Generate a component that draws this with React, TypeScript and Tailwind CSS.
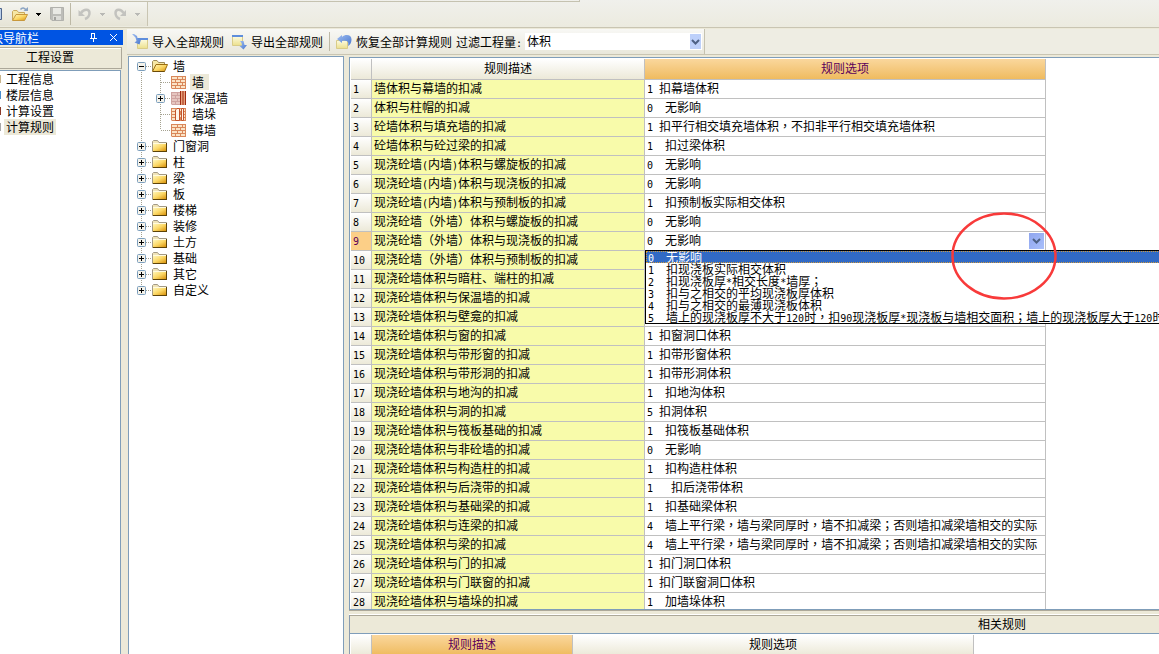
import React from "react";
import clsx from "clsx";

type Rule = [description: string, option: string];

const rules: Rule[] = [
  ["墙体积与幕墙的扣减", "1 扣幕墙体积"],
  ["体积与柱帽的扣减", "0  无影响"],
  ["砼墙体积与填充墙的扣减", "1 扣平行相交填充墙体积，不扣非平行相交填充墙体积"],
  ["砼墙体积与砼过梁的扣减", "1  扣过梁体积"],
  ["现浇砼墙(内墙)体积与螺旋板的扣减", "0  无影响"],
  ["现浇砼墙(内墙)体积与现浇板的扣减", "0  无影响"],
  ["现浇砼墙(内墙)体积与预制板的扣减", "1  扣预制板实际相交体积"],
  ["现浇砼墙（外墙）体积与螺旋板的扣减", "0  无影响"],
  ["现浇砼墙（外墙）体积与现浇板的扣减", "0  无影响"],
  ["现浇砼墙（外墙）体积与预制板的扣减", ""],
  ["现浇砼墙体积与暗柱、端柱的扣减", ""],
  ["现浇砼墙体积与保温墙的扣减", ""],
  ["现浇砼墙体积与壁龛的扣减", ""],
  ["现浇砼墙体积与窗的扣减", "1 扣窗洞口体积"],
  ["现浇砼墙体积与带形窗的扣减", "1 扣带形窗体积"],
  ["现浇砼墙体积与带形洞的扣减", "1 扣带形洞体积"],
  ["现浇砼墙体积与地沟的扣减", "1  扣地沟体积"],
  ["现浇砼墙体积与洞的扣减", "5 扣洞体积"],
  ["现浇砼墙体积与筏板基础的扣减", "1  扣筏板基础体积"],
  ["现浇砼墙体积与非砼墙的扣减", "0  无影响"],
  ["现浇砼墙体积与构造柱的扣减", "1  扣构造柱体积"],
  ["现浇砼墙体积与后浇带的扣减", "1   扣后浇带体积"],
  ["现浇砼墙体积与基础梁的扣减", "1  扣基础梁体积"],
  ["现浇砼墙体积与连梁的扣减", "4  墙上平行梁，墙与梁同厚时，墙不扣减梁；否则墙扣减梁墙相交的实际"],
  ["现浇砼墙体积与梁的扣减", "4  墙上平行梁，墙与梁同厚时，墙不扣减梁；否则墙扣减梁墙相交的实际"],
  ["现浇砼墙体积与门的扣减", "1 扣门洞口体积"],
  ["现浇砼墙体积与门联窗的扣减", "1 扣门联窗洞口体积"],
  ["现浇砼墙体积与墙垛的扣减", "1  加墙垛体积"],
];

const ACTIVE_ROW = 8;

const choices = [
  "0  无影响",
  "1  扣现浇板实际相交体积",
  "2  扣现浇板厚*相交长度*墙厚；",
  "3  扣与之相交的平均现浇板厚体积",
  "4  扣与之相交的最薄现浇板体积",
  "5  墙上的现浇板厚不大于120时，扣90现浇板厚*现浇板与墙相交面积；墙上的现浇板厚大于120时",
];

const categories = ["门窗洞", "柱", "梁", "板", "楼梯", "装修", "土方", "基础", "其它", "自定义"];

// Half-width characters take exactly half of a 12px ideograph
const Txt: React.FC<{ children: string }> = ({ children }) => (
  <span className="whitespace-pre">
    {children.split(/([\x20-\x7e]+|[，；]+)/).map((part, i) => {
      if (/^[\x20-\x7e]/.test(part)) {
        return (
          <span key={i} className="font-['DejaVu_Sans_Mono',monospace] text-[10px] leading-none">
            {part}
          </span>
        );
      }
      if (/^[，；]/.test(part)) {
        return (
          <span key={i} lang="zh-TW" className="font-['Noto_Sans_CJK_TC',sans-serif] leading-none">
            {part}
          </span>
        );
      }
      return part;
    })}
  </span>
);

const Gradients = () => (
  <svg width="0" height="0" className="absolute" aria-hidden="true">
    <defs>
      <linearGradient id="folder" x1="0" y1="0" x2="1" y2="1">
        <stop offset="0" stopColor="#fff6b8" />
        <stop offset="0.5" stopColor="#fbd765" />
        <stop offset="1" stopColor="#d8920c" />
      </linearGradient>
      <linearGradient id="note" x1="0" y1="0" x2="0" y2="1">
        <stop offset="0" stopColor="#fdfbe0" />
        <stop offset="1" stopColor="#ece08c" />
      </linearGradient>
      <linearGradient id="arrow" x1="0" y1="0" x2="1" y2="1">
        <stop offset="0" stopColor="#9dbcf0" />
        <stop offset="1" stopColor="#4a78cf" />
      </linearGradient>
    </defs>
  </svg>
);

const Folder = () => (
  <svg width="16" height="16" viewBox="0 0 16 16" className="shrink-0">
    <path d="M0.5 13.5V3.5L1.5 2.5H5.5L7 4.5H14.5V13.5Z" fill="#efe3b8" stroke="#a39a86" />
    <path d="M1 6H14V13H1Z" fill="url(#folder)" />
    <path d="M1 5.5H14" stroke="#fffbe0" />
    <path d="M1 13.5H15M14.5 5V14" stroke="#5d4308" />
  </svg>
);

const FolderOpen = () => (
  <svg width="16" height="16" viewBox="0 0 16 16" className="shrink-0">
    <path d="M0.5 13V3.5L1.5 2.5H5L6.5 4.5H12.5V7" fill="#f6e7a4" stroke="#9d8a58" />
    <path d="M0.5 13.5L4 6.5H15.5L12.5 13.5Z" fill="url(#folder)" stroke="#9b6d10" />
    <path d="M1 13.5H12.5" stroke="#6b4a08" />
  </svg>
);

const Bricks: React.FC<{ variant?: "plain" | "insulated" | "pier" }> = ({ variant = "plain" }) => (
  <svg width="16" height="16" viewBox="0 0 16 16" className="shrink-0">
    <path d="M1 2H15V14H1Z" fill={variant === "insulated" ? "#e6c6c0" : "#fbe3c6"} />
    <path
      d="M0.5 2V14.5M15 2.5H1M1 5.5H15M1 8.5H15M1 11.5H15M1 14.5H15M6.5 3V5M11.5 3V5M4.5 6V8M9.5 6V8M6.5 9V11M11.5 9V11M4.5 12V14M9.5 12V14M14.5 3V14"
      fill="none"
      stroke={variant === "insulated" ? "#cfa3a0" : "#d9875a"}
    />
    {variant === "insulated" && (
      <>
        <path d="M9 1H15V15H9Z" fill="#e8a27c" />
        <path d="M9.5 1V15M12 1V15M14.5 1V15" stroke="#a02a10" />
      </>
    )}
    {variant === "pier" && (
      <path d="M4.5 14.5V4L6 2.5H8.5V14.5ZM10.5 2.5H12.5V14.5H10.5Z" fill="#fff6ea" stroke="#c4552c" />
    )}
  </svg>
);

interface BranchProps {
  sign?: "+" | "-";
  up?: boolean;
  down?: boolean;
  across?: boolean;
}

const Branch: React.FC<BranchProps> = ({ sign, up, down, across = true }) => (
  <svg width="19" height="16" viewBox="0 0 19 16" className="shrink-0">
    <g stroke="#a5a290" strokeDasharray="1 1">
      {up && <path d="M8.5 0V8" />}
      {down && <path d="M8.5 8V16" />}
      {across && <path d="M9 8.5H18" />}
    </g>
    {sign && (
      <>
        <rect x="4.5" y="4.5" width="8" height="8" rx="1" fill="#f4f2ea" stroke="#7b9ebd" />
        <path d={sign === "+" ? "M6 8.5H11M8.5 6V11" : "M6 8.5H11"} stroke="#000" />
      </>
    )}
  </svg>
);

const TreeLabel: React.FC<{ text: string; selected?: boolean }> = ({ text, selected }) => (
  <span className={clsx("ml-[3px] h-4 px-[2px] leading-4", selected && "bg-[#ece9d8] pr-[5px]")}>{text}</span>
);

const Tree = () => (
  <ul role="tree" className="pl-1 pt-px">
    <li role="treeitem" aria-expanded="true">
      <div className="flex h-4 items-center">
        <Branch sign="-" down />
        <FolderOpen />
        <TreeLabel text="墙" />
      </div>
      <ul role="group">
        <li role="treeitem" aria-selected="true" className="flex h-4 items-center">
          <Branch up down across={false} />
          <Branch up down />
          <Bricks />
          <TreeLabel text="墙" selected />
        </li>
        <li role="treeitem" className="flex h-4 items-center">
          <Branch up down across={false} />
          <Branch up down sign="+" />
          <Bricks variant="insulated" />
          <TreeLabel text="保温墙" />
        </li>
        <li role="treeitem" className="flex h-4 items-center">
          <Branch up down across={false} />
          <Branch up down />
          <Bricks variant="pier" />
          <TreeLabel text="墙垛" />
        </li>
        <li role="treeitem" className="flex h-4 items-center">
          <Branch up down across={false} />
          <Branch up />
          <Bricks />
          <TreeLabel text="幕墙" />
        </li>
      </ul>
    </li>
    {categories.map((name, i) => (
      <li key={name} role="treeitem" className="flex h-4 items-center">
        <Branch sign="+" up down={i < categories.length - 1} />
        <Folder />
        <TreeLabel text={name} />
      </li>
    ))}
  </ul>
);

const Caret: React.FC<{ color: string }> = ({ color }) => (
  <svg width="5" height="3" viewBox="0 0 5 3" className="shrink-0" shapeRendering="crispEdges">
    <path d="M0 0H5V1H4V2H3V3H2V2H1V1H0Z" fill={color} />
  </svg>
);

const Chevron = () => (
  <svg width="9" height="6" viewBox="0 0 9 6">
    <path d="M1 1L4.5 4.5L8 1" fill="none" stroke="#4d6185" strokeWidth="2" />
  </svg>
);

const MainToolbar = () => (
  <header className="shrink-0 border-b border-[#c9c5b2] bg-gradient-to-b from-[#f0f0ec] to-[#ecebdf] pb-px">
    <div className="h-[2px] w-1/2 border-b border-r border-[#c5c2b0]" />
    <div className="flex h-6 w-[148px] items-center overflow-hidden border-r border-[#c9c5b2] bg-gradient-to-b from-[#f4f4f0] to-[#e6e4d6]">
      <button aria-label="新建" className="-ml-[13px] shrink-0">
        <svg width="16" height="16" viewBox="0 0 16 16">
          <path d="M3 2.5H14.5V13.5H3Z" fill="#bcd0ea" stroke="#4d648c" />
        </svg>
      </button>
      <button aria-label="打开" className="ml-[9px] flex shrink-0 items-center gap-[7px]">
        <svg width="17" height="16" viewBox="0 0 17 16">
          <path d="M0.5 14V5.5L1.5 4.5H5L6.5 6.5H12.5V8" fill="#f6e7a4" stroke="#c9a85c" />
          <path d="M0.5 14.5L4 8.5H15.5L12.5 14.5Z" fill="url(#folder)" stroke="#c8983c" />
          <path d="M8.5 3.5C10 1.5 12.5 1.5 14 4" fill="none" stroke="#8aa3c2" strokeWidth="1.5" />
          <path d="M11.5 5H16V1Z" fill="#8aa3c2" />
        </svg>
        <Caret color="#000" />
      </button>
      <button aria-label="保存" disabled className="ml-2 shrink-0">
        <svg width="16" height="16" viewBox="0 0 16 16">
          <path d="M1.5 1.5H14.5V14.5H3L1.5 13Z" fill="#bdbdb9" stroke="#b1b1ad" />
          <path d="M4 2H12V8H4Z" fill="#e9e9e5" />
          <path d="M4 10H12V14H4Z" fill="#dcdcd8" />
          <path d="M5 11H7V14H5Z" fill="#a3a39f" />
        </svg>
      </button>
      <span className="ml-[5px] h-[22px] w-px shrink-0 bg-[#bdb9a6]" />
      <button aria-label="撤销" disabled className="ml-[7px] flex shrink-0 items-center gap-2">
        <svg width="14" height="14" viewBox="0 0 14 14">
          <path d="M3 6C6 1.5 11.5 2 11.5 6C11.5 9 9.5 11 7 12" fill="none" stroke="#c3c3bf" strokeWidth="2.5" />
          <path d="M0.5 3V9H7Z" fill="#c3c3bf" />
        </svg>
        <Caret color="#b9b9b5" />
      </button>
      <button aria-label="重做" disabled className="ml-2 flex shrink-0 items-center gap-2">
        <svg width="14" height="14" viewBox="0 0 14 14">
          <path d="M10.5 6C8 1.5 2.5 2 2.5 6C2.5 9 4.5 11 7 12" fill="none" stroke="#c3c3bf" strokeWidth="2.5" />
          <path d="M13 3V9H7Z" fill="#c3c3bf" />
        </svg>
        <Caret color="#b9b9b5" />
      </button>
    </div>
  </header>
);

const navItems = [
  { name: "工程信息", tint: "bg-[#c8b48c]" },
  { name: "楼层信息", tint: "bg-[#4a8fd0]" },
  { name: "计算设置", tint: "bg-[#8c3a2a]" },
  { name: "计算规则", tint: "bg-[#a8a8a8]" },
];

// The dock is wider than its visible part; its left edge runs off the window
const NavDock = () => (
  <aside className="-ml-[21px] flex w-[144px] shrink-0 flex-col pt-px">
    <div className="flex h-[15px] items-center bg-[#0054e3] text-white">
      <h2 className="flex-1 leading-[15px]">模块导航栏</h2>
      <button aria-label="固定" className="mr-3">
        <svg width="7" height="9" viewBox="0 0 7 9" shapeRendering="crispEdges">
          <path d="M1.5 5V0.5H5M4.5 0V5M0 5.5H7M3.5 6V9" fill="none" stroke="#fff" />
        </svg>
      </button>
      <button aria-label="关闭" className="mr-[5px]">
        <svg width="9" height="9" viewBox="0 0 9 9">
          <path d="M1 1L8 8M8 1L1 8" stroke="#fff" />
        </svg>
      </button>
    </div>
    <button className="mr-px mt-[2px] h-[22px] border-b border-r border-[#aca899] bg-[#ece9d8] pb-px shadow-[inset_0_1px_0_#aca899,inset_0_2px_0_#fff]">
      工程设置
    </button>
    <ul className="mr-[2px] mt-px flex-1 border-r border-t border-[#7f9db9] bg-white">
      {navItems.map(({ name, tint }, i) => (
        <li key={name} className="flex h-4 items-center pl-[6px]">
          <span className={clsx("h-2 w-4 shrink-0", tint)} />
          <a
            href="#"
            className={clsx("ml-[3px] px-[2px] leading-4", i === navItems.length - 1 && "bg-[#ece9d8]")}
          >
            {name}
          </a>
        </li>
      ))}
    </ul>
  </aside>
);

const RuleToolbar = () => (
  <div className="flex shrink-0 border-b border-[#c9c5b2] bg-[#eeede3]">
    <div className="flex h-[25px] items-center border-r border-[#c5c2b0] bg-gradient-to-b from-[#f8f8f5] to-[#e9e7da] pl-[5px] pr-[2px]">
      <button className="flex items-center gap-1">
        <svg width="16" height="16" viewBox="0 0 16 16">
          <path d="M5.5 5.5H15.5V14.5H5.5Z" fill="url(#note)" stroke="#d9cc88" />
          <path d="M5 4H16V6H5Z" fill="#5f8edc" />
          <path d="M0 0H2L5 2L6 6L9 5.5L7.5 10.5L2.5 8.5L4.5 7L3.5 3.500Z" fill="url(#arrow)" />
        </svg>
        导入全部规则
      </button>
      <button className="ml-[7px] flex items-center gap-1">
        <svg width="16" height="16" viewBox="0 0 16 16">
          <path d="M1.5 2.5H11.5V11.5H1.5Z" fill="url(#note)" stroke="#d9cc88" />
          <path d="M1 1H12V3H1Z" fill="#5f8edc" />
          <path d="M9 7H12.5L13.5 11H16L12.500 15.500L8.5 12L11 11.500L10.500 9Z" fill="url(#arrow)" />
        </svg>
        导出全部规则
      </button>
      <span className="ml-[6px] h-[19px] w-px bg-[#bdb9a6]" />
      <button className="ml-[6px] flex items-center gap-1">
        <svg width="16" height="16" viewBox="0 0 16 16">
          <path d="M0.5 6.5H11.5V14.5H0.5Z" fill="url(#note)" stroke="#d9cc88" />
          <path d="M1 5L6 1V3C10 -0.5 16 1 15.5 6C15.3 9 14 11 12 12C13 8 12 6 6 7V9Z" fill="url(#arrow)" />
        </svg>
        恢复全部计算规则
      </button>
      <label htmlFor="quantity" className="ml-1 w-[69px]">
        <Txt>过滤工程量:</Txt>
      </label>
      <div className="relative">
        <select
          id="quantity"
          defaultValue="体积"
          className="block h-[17px] w-[177px] appearance-none bg-white pb-[2px] pl-[2px] leading-[15px] outline-none"
        >
          <option>体积</option>
          <option>面积</option>
        </select>
        <span className="pointer-events-none absolute right-px top-px flex h-[15px] w-[11px] items-center justify-center bg-[#bdd0fa]">
          <Chevron />
        </span>
      </div>
    </div>
  </div>
);

const HEAD = "h-[21px] border-b border-r border-[#c0c0c0] p-0 pb-[2px] text-center font-normal";
const HEAD_PLAIN = "bg-gradient-to-b from-white to-[#ece9d8]";
const HEAD_ACTIVE = "bg-gradient-to-b from-[#fad79c] to-[#efbb5e] text-[#5a005a]";
const CELL = "h-[19px] border-b border-r border-[#c0c0c0] p-0 pl-[2px] leading-4";

const RuleTable = () => (
  <table className="w-[695px] table-fixed border-separate border-spacing-0">
    <colgroup>
      <col className="w-[21px]" />
      <col className="w-[273px]" />
      <col className="w-[401px]" />
    </colgroup>
    <thead>
      <tr>
        <th className={clsx(HEAD, HEAD_PLAIN)} />
        <th className={clsx(HEAD, HEAD_PLAIN)}>规则描述</th>
        <th className={clsx(HEAD, HEAD_ACTIVE)}>规则选项</th>
      </tr>
    </thead>
    <tbody>
      {rules.map(([description, option], i) => (
        <tr key={description}>
          <th
            scope="row"
            className={clsx(
              CELL,
              "pb-[2px] text-left font-normal",
              i === ACTIVE_ROW ? "bg-[#fccf87] text-[#5a005a]" : HEAD_PLAIN
            )}
          >
            <Txt>{String(i + 1)}</Txt>
          </th>
          <td className={clsx(CELL, "bg-[#f8fbaa] pb-[2px]")}>
            <Txt>{description}</Txt>
          </td>
          <td className={clsx(CELL, "bg-white", i === ACTIVE_ROW ? "relative" : "pb-[2px]")}>
            {i === ACTIVE_ROW ? <ActiveOption value={option} /> : <Txt>{option}</Txt>}
          </td>
        </tr>
      ))}
    </tbody>
  </table>
);

const ActiveOption: React.FC<{ value: string }> = ({ value }) => (
  <>
    <div className="flex h-[18px] items-start justify-between pr-px">
      <Txt>{value}</Txt>
      <button
        aria-label="展开选项"
        aria-haspopup="listbox"
        className="flex h-4 w-[15px] items-center justify-center self-center bg-gradient-to-br from-[#8fa5ee] to-[#a9c0fb]"
      >
        <Chevron />
      </button>
    </div>
    <ul role="listbox" className="absolute left-0 top-[18px] z-10 w-max border border-black bg-white">
      {choices.map((choice, i) => (
        <li
          key={choice}
          role="option"
          aria-selected={i === 0}
          className={clsx(
            "h-3 pl-[2px] leading-3",
            i === 0 && "bg-[#316ac5] text-white outline-1 -outline-offset-1 outline-dotted outline-[#d09a3c]"
          )}
        >
          <Txt>{choice}</Txt>
        </li>
      ))}
    </ul>
    <svg
      width="108"
      height="90"
      viewBox="0 0 108 90"
      className="pointer-events-none absolute -top-[21px] left-[305px] z-20"
    >
      <ellipse cx="54" cy="45" rx="51.5" ry="42.5" fill="none" stroke="#f83a3a" strokeWidth="2.5" />
    </svg>
  </>
);

const RelatedRules = () => (
  <section className="shrink-0 border-l border-[#8a9cb0]">
    <h2 className="h-[18px] border-t border-[#aca899] bg-[#ece9d8] pl-[628px] leading-[15px]">相关规则</h2>
    <div className="h-[21px] overflow-hidden border-t border-[#7f9db9] bg-white pl-px pt-px">
      <table className="w-[623px] table-fixed border-separate border-spacing-0">
        <colgroup>
          <col className="w-[21px]" />
          <col className="w-[201px]" />
          <col className="w-[401px]" />
        </colgroup>
        <thead>
          <tr>
            <th className={clsx(HEAD, HEAD_PLAIN)} />
            <th className={clsx(HEAD, HEAD_ACTIVE)}>规则描述</th>
            <th className={clsx(HEAD, HEAD_PLAIN)}>规则选项</th>
          </tr>
        </thead>
      </table>
    </div>
  </section>
);

export default function App() {
  return (
    <div className="flex h-screen flex-col overflow-hidden bg-[#ece9d8] font-['Noto_Sans_CJK_SC',sans-serif] text-xs leading-4 text-black">
      <Gradients />
      <MainToolbar />
      <div className="flex min-h-0 flex-1 gap-1 pt-px">
        <NavDock />
        <main className="flex min-w-0 flex-1 flex-col">
          <RuleToolbar />
          <div className="flex min-h-0 flex-1 gap-[5px] pt-px">
            <nav className="ml-px w-[216px] shrink-0 border-x border-t border-[#7f9db9] bg-white">
              <Tree />
            </nav>
            <div className="flex min-w-0 flex-1 flex-col pt-px">
              <div className="min-h-0 flex-1 overflow-hidden border-y border-l border-[#7f9db9] bg-white pl-px pt-px">
                <RuleTable />
              </div>
              <div className="h-[5px] shrink-0 border-b border-t border-b-white border-t-[#aca899]" />
              <RelatedRules />
            </div>
          </div>
        </main>
      </div>
    </div>
  );
}
